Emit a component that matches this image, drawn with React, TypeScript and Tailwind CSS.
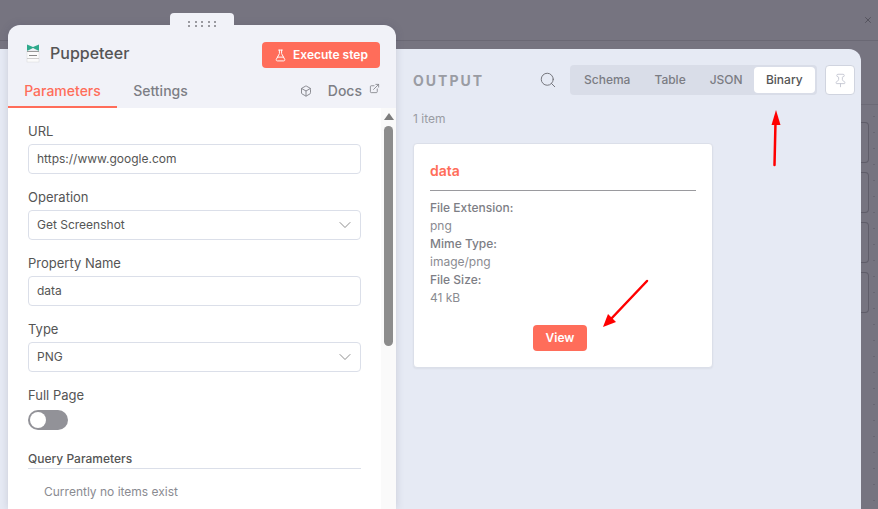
import React from 'react';
import { ChevronDown, ExternalLink, FlaskConical, Box, Search, Pin, X } from 'lucide-react';

function Field({ label, value, select }: { label: string; value: string; select?: boolean }) {
  return (
    <div className="mb-[14px]">
      <div className="h-[22px] text-[13px] leading-[18px] text-[#555]">{label}</div>
      <div className="flex h-[30px] items-center justify-between rounded-[4px] border border-[#dbdfe9] bg-white pl-2 pr-[5px] text-[12px] text-[#555]">
        <span>{value}</span>
        {select && <ChevronDown size={20} strokeWidth={1} className="text-[#777]" />}
      </div>
    </div>
  );
}

function PuppeteerLogo() {
  return (
    <svg width="14" height="19" viewBox="0 0 14 19">
      <path d="M1 0.5 L7 3 L13 0.5 L13 7 L7 4 L1 7 Z" fill="#2fa98c" />
      <rect x="1" y="7" width="12" height="11" fill="#fbfbfb" stroke="#d8d8d8" strokeWidth="0.5" />
      <rect x="1" y="7" width="12" height="1" fill="#9a9a9a" />
      <rect x="3" y="11" width="8" height="1" fill="#888" />
      <rect x="1" y="14" width="12" height="0.7" fill="#bbb" />
    </svg>
  );
}

function Meta({ name, value }: { name: string; value: string }) {
  return (
    <>
      <div className="font-medium text-[#7d7e85]">{name}</div>
      <div className="text-[#8a8b91]">{value}</div>
    </>
  );
}

export default function App() {
  return (
    <div className="relative h-[509px] w-[878px] overflow-hidden bg-[#767480] font-['Inter',sans-serif]">
      {/* dimmed canvas behind the modal */}
      <div className="flex h-[41px] items-center justify-end border-b border-[#6a6874] pr-[5px]">
        <X size={10} className="text-[#4e4d57]" />
      </div>
      <div className="absolute right-0 top-[104px] h-px w-[17px] bg-[#6c6a76]" />
      <div className="absolute left-[861px] top-[122px] flex w-[8px] flex-col gap-[9px]">
        <div className="h-[41px] rounded-r-[4px] border border-l-0 border-[#5f5d69]" />
        <div className="h-[41px] rounded-r-[4px] border border-l-0 border-[#5f5d69]" />
        <div className="h-[41px] rounded-r-[4px] border border-l-0 border-[#5f5d69]" />
        <div className="h-[41px] rounded-r-[4px] border border-l-0 border-[#5f5d69]" />
      </div>
      <div className="absolute left-[873px] top-[116px] flex flex-col gap-[15px]">
        {Array.from({ length: 25 }).map((_, i) => (
          <span key={i} className="h-px w-[2px] bg-[#686672]" />
        ))}
      </div>

      {/* output panel */}
      <div className="mt-2 h-[460px] w-[861px] rounded-tr-xl bg-[#e6eaf4] pl-[413px] pr-[6px] pt-4">
        <div className="flex h-[30px] items-center">
          <span className="mt-[1px] w-[126px] text-[14px] font-bold tracking-[2px] text-[#9a9ca3]">OUTPUT</span>
          <Search size={18} strokeWidth={1.25} className="text-[#6f7076]" />
          <div className="ml-[13px] flex h-[30px] w-[247px] items-center rounded-[4px] bg-[#d9dde8] pl-[14px] pr-[2px] text-[12px] font-medium text-[#7b7c83]">
            <span className="mr-6">Schema</span>
            <span className="mr-6">Table</span>
            <span className="mr-[11px]">JSON</span>
            <span className="flex h-[26px] flex-1 items-center justify-center rounded-[4px] bg-white text-[#555]">Binary</span>
          </div>
          <div className="ml-2 flex h-[30px] w-[30px] items-center justify-center rounded-[4px] border border-[#d0d4df] bg-white">
            <Pin size={15} strokeWidth={1.5} className="text-[#c5c8d2]" />
          </div>
        </div>
        <div className="mt-4 h-[15px] text-[12px] leading-[15px] text-[#9a9ca3]">1 item</div>
        <div className="mt-[17px] h-[225px] w-[300px] rounded-[4px] border border-[#dbdfe9] bg-white px-4 pt-[17px] shadow-[0_1px_2px_rgba(0,0,0,0.05)]">
          <div className="text-[14px] font-semibold leading-5 text-[#ff6d5a]">data</div>
          <div className="mt-[9px] border-t border-[#9a9a9e]" />
          <div className="mt-2 text-[12px] leading-[18px]">
            <Meta name="File Extension:" value="png" />
            <Meta name="Mime Type:" value="image/png" />
            <Meta name="File Size:" value="41 kB" />
          </div>
          <div className="mt-[18px] flex justify-center pr-[6px]">
            <span className="flex h-[26px] w-[54px] items-center justify-center rounded-[4px] bg-[#ff6d5a] text-[12px] font-semibold text-white">View</span>
          </div>
        </div>
      </div>

      {/* node settings panel, floats over the modal */}
      <div className="absolute bottom-0 left-[8px] top-[25px] flex w-[388px] flex-col overflow-hidden rounded-t-xl bg-[#f1f2f8] shadow-[0_0_8px_rgba(60,60,90,0.18)]">
        <div className="flex h-[43px] shrink-0 items-end justify-between pl-[18px] pr-4">
          <div className="mb-[2px] flex h-[26px] items-center">
            <PuppeteerLogo />
            <span className="ml-[10px] text-[16px] font-medium text-[#555]">Puppeteer</span>
          </div>
          <div className="flex h-[26px] w-[118px] items-center justify-center gap-[6px] rounded-[4px] bg-[#ff6d5a] text-[12px] font-semibold text-white">
            <FlaskConical size={13} strokeWidth={1.75} />
            Execute step
          </div>
        </div>
        <div className="flex h-[40px] shrink-0 items-end justify-between pr-[16px]">
          <div className="flex text-[14px]">
            <div className="flex h-[28px] w-[109px] items-start justify-center border-b-2 border-[#ff6d5a] font-medium text-[#ff6d5a]">Parameters</div>
            <div className="flex h-[28px] w-[87px] items-start justify-center font-medium text-[#7d7e85]">Settings</div>
          </div>
          <div className="flex h-[28px] items-start text-[14px] font-medium text-[#7d7e85]">
            <Box size={12} strokeWidth={1.75} className="mr-[16px] mt-[5px]" />
            <span>Docs</span>
            <ExternalLink size={11} strokeWidth={1.75} className="ml-[7px] mt-[3px]" />
          </div>
        </div>
        <div className="flex min-h-0 flex-1 bg-white">
          <div className="min-w-0 flex-1 pl-5 pr-5 pt-[14px]">
            <Field label="URL" value="https://www.google.com" />
            <Field label="Operation" value="Get Screenshot" select />
            <Field label="Property Name" value="data" />
            <Field label="Type" value="PNG" select />
            <div className="h-[16px] text-[13px] leading-[18px] text-[#555]">Full Page</div>
            <div className="mt-2 flex h-[20px] w-[40px] items-center rounded-full bg-[#929298] pl-[2px]">
              <span className="h-4 w-4 rounded-full bg-white" />
            </div>
            <div className="mt-5 border-b border-[#dbdfe9] text-[12px] font-medium leading-[18px] text-[#555]">Query Parameters</div>
            <div className="mt-[15px] pl-4 text-[12px] leading-4 text-[#8a8b91]">Currently no items exist</div>
          </div>
          <div className="flex w-[15px] shrink-0 flex-col items-center bg-[#fafafa] pt-[5px]">
            <span className="h-0 w-0 border-x-[5px] border-b-[7px] border-x-transparent border-b-[#7c7c7c]" />
            <span className="mt-[6px] h-[220px] w-[9px] rounded-full bg-[#8c8c8c]" />
          </div>
        </div>
      </div>
      <div className="absolute left-[170px] top-[13px] flex h-[16px] w-[64px] items-start justify-center rounded-t-[4px] bg-[#f1f2f8] pt-[8px]">
        <div className="grid grid-cols-5 gap-x-[4.5px] gap-y-[2px]">
          {Array.from({ length: 10 }).map((_, i) => (
            <span key={i} className="h-[2px] w-[2px] bg-[#9a9aa0]" />
          ))}
        </div>
      </div>

      {/* annotation arrows */}
      <svg className="absolute inset-0 pointer-events-none" width="878" height="509">
        <path d="M774.5 165 L775.5 122" stroke="#ff0000" strokeWidth="2.5" strokeLinecap="round" fill="none" />
        <path d="M776 110 L780.5 125 L771.5 125 Z" fill="#ff0000" />
        <path d="M647 281 L610 320" stroke="#ff0000" strokeWidth="2.5" strokeLinecap="round" fill="none" />
        <path d="M603 327 L608 314 L616 322 Z" fill="#ff0000" />
      </svg>
    </div>
  );
}
